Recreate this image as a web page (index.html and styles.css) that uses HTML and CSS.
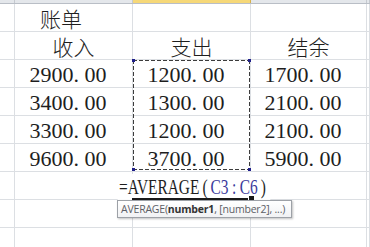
FILE: index.html
```html
<!DOCTYPE html>
<html lang="zh-CN">
<head>
<meta charset="utf-8">
<title>账单</title>
<link rel="stylesheet" href="styles.css">
</head>
<body>
<div class="sheet">
  <div class="colhead">
    <div class="hc"></div><div class="hc"></div><div class="hc sel"></div><div class="hc"></div><div class="hc"></div>
  </div>
  <div class="grid">
    <div class="c"></div><div class="c cjk title">账单</div><div class="c"></div><div class="c"></div><div class="c"></div>

    <div class="c"></div><div class="c cjk center">收入</div><div class="c cjk center">支出</div><div class="c cjk center">结余</div><div class="c"></div>

    <div class="c"></div><div class="c num">2900<span class="d">.</span>00</div><div class="c num">1200<span class="d">.</span>00</div><div class="c num">1700<span class="d">.</span>00</div><div class="c"></div>
    <div class="c"></div><div class="c num">3400<span class="d">.</span>00</div><div class="c num">1300<span class="d">.</span>00</div><div class="c num">2100<span class="d">.</span>00</div><div class="c"></div>
    <div class="c"></div><div class="c num">3300<span class="d">.</span>00</div><div class="c num">1200<span class="d">.</span>00</div><div class="c num">2100<span class="d">.</span>00</div><div class="c"></div>
    <div class="c"></div><div class="c num">9600<span class="d">.</span>00</div><div class="c num">3700<span class="d">.</span>00</div><div class="c num">5900<span class="d">.</span>00</div><div class="c"></div>

    <div class="c"></div><div class="c"></div><div class="c formula-cell"><span class="formula">=AVERAGE<span class="p">(</span><span class="ref">C3<span class="p">:</span>C6</span><span class="p">)</span></span></div><div class="c"></div><div class="c"></div>

    <div class="c"></div><div class="c"></div><div class="c"></div><div class="c"></div><div class="c"></div>
    <div class="c"></div><div class="c"></div><div class="c"></div><div class="c"></div><div class="c"></div>
  </div>

  <div class="marquee">
    <span class="h tl"></span><span class="h tr"></span><span class="h bl"></span><span class="h br"></span>
  </div>
  <div class="active-edge"><span class="handle"></span></div>
  <div class="tip">AVERAGE(<b>number1</b>, [number2], ...)</div>
</div>
</body>
</html>
```

FILE: styles.css
```css
html, body {
  margin: 0;
  padding: 0;
  background: #ffffff;
}

.sheet {
  position: relative;
  width: 370px;
  height: 247px;
  overflow: hidden;
  background: #ffffff;
  color: #1e1e1e;
}

.colhead {
  display: grid;
  grid-template-columns: 15px 118px 118px 116px 1fr;
  height: 4px;
  box-sizing: border-box;
  border-bottom: 1px solid #b9bec6;
}

.hc {
  background: #e4e7eb;
  border-right: 1px solid #c5c9cf;
}

.hc.sel {
  background: #f6d878;
  border-right-color: #d7b14c;
}

.grid {
  display: grid;
  grid-template-columns: 15px 118px 118px 116px 1fr;
  grid-auto-rows: 28px;
}

.c {
  box-sizing: border-box;
  border-right: 1px solid #dcdfe3;
  border-bottom: 1px solid #dcdfe3;
  display: flex;
  align-items: center;
  white-space: nowrap;
}

.cjk {
  font-family: "Noto Sans CJK SC", sans-serif;
  font-weight: 300;
  font-size: 21px;
  line-height: 1;
}

.title {
  padding-left: 25px;
  padding-top: 2px;
}

.center {
  justify-content: center;
  padding-top: 2px;
}

.num {
  justify-content: center;
  padding-right: 11px;
  padding-top: 2px;
  font-family: "Liberation Serif", serif;
  font-size: 22px;
  line-height: 1;
}

.num .d {
  display: inline-block;
  width: 0.5em;
}

.formula-cell {
  justify-content: center;
  overflow: visible;
  position: relative;
  z-index: 1;
  border-right-color: transparent;
}

.formula {
  display: inline-block;
  font-family: "Liberation Serif", serif;
  font-size: 22px;
  line-height: 26px;
  background: #ffffff;
  padding: 0 2px;
  margin-left: 6px;
  margin-top: 2px;
  transform: scaleX(0.7);
}

.formula .p {
  display: inline-block;
  width: 16px;
  text-align: center;
}

.formula .ref {
  color: #3b3b9c;
}

.formula > .p:last-child {
  color: #1e1e1e;
}

.marquee {
  position: absolute;
  left: 133px;
  top: 60px;
  width: 117px;
  height: 110px;
  background:
    repeating-linear-gradient(90deg, #3c3c3c 0 4px, transparent 4px 6px) left top / 100% 1px no-repeat,
    repeating-linear-gradient(90deg, #3c3c3c 0 4px, transparent 4px 6px) left bottom / 100% 1px no-repeat,
    repeating-linear-gradient(180deg, #3c3c3c 0 4px, transparent 4px 6px) left top / 1px 100% no-repeat,
    repeating-linear-gradient(180deg, #3c3c3c 0 4px, transparent 4px 6px) right top / 1px 100% no-repeat;
}

.h {
  position: absolute;
  width: 3px;
  height: 3px;
  background: #1f1f8a;
}

.h.tl { left: -1px; top: -1px; }
.h.tr { right: -1px; top: -1px; }
.h.bl { left: -1px; bottom: -1px; }
.h.br { right: -1px; bottom: -1px; }

.active-edge {
  position: absolute;
  left: 132px;
  top: 198px;
  width: 119px;
  height: 2px;
  background: #1a1a1a;
  z-index: 2;
}

.handle {
  position: absolute;
  right: -3px;
  top: -2px;
  width: 5px;
  height: 5px;
  background: #1a1a1a;
  border: 1px solid #ffffff;
  box-sizing: content-box;
  margin: -1px;
}

.tip {
  position: absolute;
  left: 117px;
  top: 200px;
  width: 175px;
  height: 18px;
  box-sizing: border-box;
  padding: 0 0 0 3px;
  border: 1px solid #9da1a7;
  background: linear-gradient(#ffffff, #f1f2f4);
  box-shadow: 1px 1px 2px rgba(0, 0, 0, 0.25);
  font-family: "Open Sans", sans-serif;
  font-size: 10.5px;
  line-height: 16px;
  color: #5d6066;
  white-space: nowrap;
  z-index: 3;
  letter-spacing: -0.2px;
}

.tip b {
  color: #333333;
  font-weight: 700;
}
```
